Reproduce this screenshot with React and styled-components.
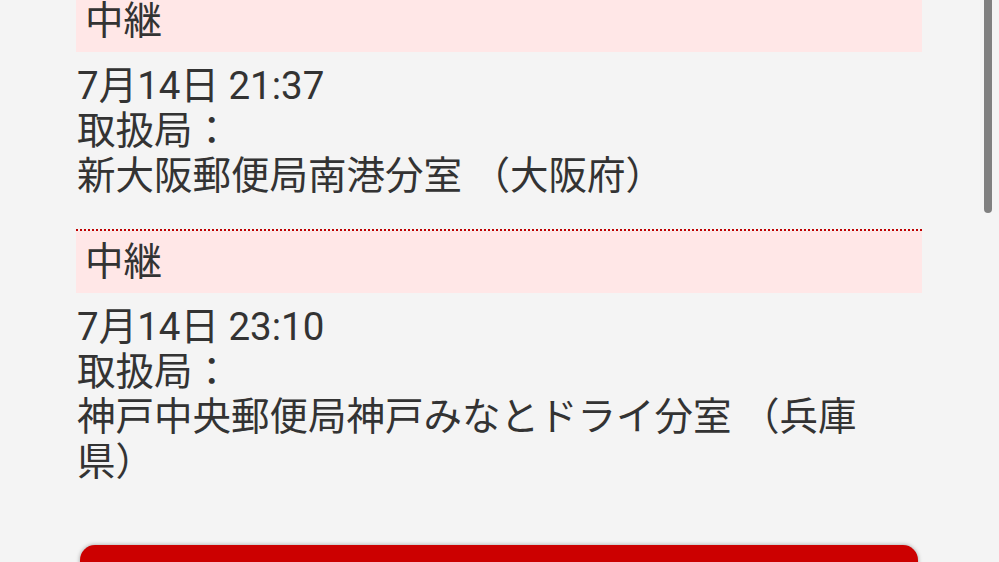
import React from "react";
import styled, { createGlobalStyle } from "styled-components";

const Global = createGlobalStyle`
  html, body {
    margin: 0;
    padding: 0;
    background: #f4f4f4;
    overflow: hidden;
  }
  body {
    font-family: Roboto, "Noto Sans CJK JP", "Noto Sans", sans-serif;
    color: #333333;
  }
`;

const Viewport = styled.div`
  position: relative;
  width: 999px;
  height: 562px;
  overflow: hidden;
  background: #f4f4f4;
`;

const Page = styled.div`
  margin-top: -10px;
  padding: 0 77px 0 76px;
  display: flex;
  flex-direction: column;
`;

const Item = styled.section`
  border-bottom: ${(p) => (p.$last ? "none" : "2px dotted #c00000")};
`;

const Header = styled.div`
  background: #ffe7e7;
  padding: 8px 10px 8px 9px;
  font-size: 38.5px;
  line-height: 46px;
  color: #333333;
`;

const Body = styled.div`
  padding: 11px 30px 31px 1px;
  font-size: 38.5px;
  line-height: 45px;
  color: #333333;
`;

const Line = styled.div``;

const Button = styled.div`
  margin: 30px 4px 0 4px;
  height: 90px;
  border-radius: 15px;
  background: #cc0000;
  box-shadow: 0 0 4px rgba(0, 0, 0, 0.35);
`;

const Scrollbar = styled.div`
  position: absolute;
  top: -10px;
  right: 7px;
  width: 8px;
  height: 223px;
  border-radius: 4px;
  background: #808080;
`;

const items = [
  {
    status: "中継",
    date: "7月14日 21:37",
    office: "新大阪郵便局南港分室 （大阪府）",
  },
  {
    status: "中継",
    date: "7月14日 23:10",
    office: "神戸中央郵便局神戸みなとドライ分室 （兵庫県）",
  },
];

export default function App() {
  return (
    <Viewport>
      <Global />
      <Page>
        {items.map((it, i) => (
          <Item key={i} $last={i === items.length - 1}>
            <Header>{it.status}</Header>
            <Body>
              <Line>{it.date}</Line>
              <Line>取扱局：</Line>
              <Line>{it.office}</Line>
            </Body>
          </Item>
        ))}
        <Button />
      </Page>
      <Scrollbar />
    </Viewport>
  );
}
